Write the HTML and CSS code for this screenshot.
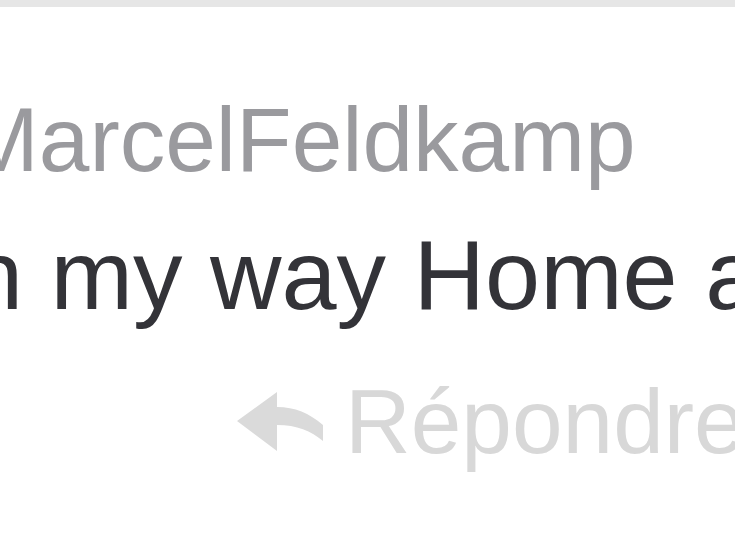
FILE: index.html
```html
<!DOCTYPE html>
<html lang="fr">
<head>
<meta charset="utf-8">
<title>Tweet</title>
<link rel="stylesheet" href="styles.css">
</head>
<body>
<div class="page">
  <div class="band"></div>
  <div class="tweet">
    <div class="user">MarcelFeldkamp</div>
    <div class="text">On my way Home after work</div>
    <div class="actions">
      <svg class="reply-icon" width="86" height="63" viewBox="0 0 86 63" aria-hidden="true">
        <path d="M0 30 L40 1 L40 16 C58 16 72 22 86 34 L86 50 C74 40 60 34 40 34 L40 60 Z"/>
      </svg>
      <span class="reply-label">Répondre</span>
    </div>
  </div>
</div>
</body>
</html>
```
FILE: styles.css
```css
html, body {
  margin: 0;
  padding: 0;
  background: #ffffff;
}
.page {
  width: 735px;
  height: 550px;
  overflow: hidden;
  font-family: "Liberation Sans", Arial, sans-serif;
}
.band {
  height: 7px;
  background: #e6e6e6;
}
.tweet {
  padding-top: 83px;
  white-space: nowrap;
}
.user {
  font-size: 91px;
  line-height: 100px;
  color: #9a9a9e;
  margin-left: -37px;
}
.text {
  margin-top: 30px;
  font-size: 99px;
  line-height: 110px;
  color: #333338;
  margin-left: -109px;
}
.actions {
  margin-top: 42px;
  display: flex;
  align-items: center;
  padding-left: 237px;
  gap: 22px;
  color: #d8d8d8;
}
.reply-icon {
  flex: none;
  fill: #dadada;
}
.reply-label {
  font-size: 91px;
  line-height: 100px;
}
```
